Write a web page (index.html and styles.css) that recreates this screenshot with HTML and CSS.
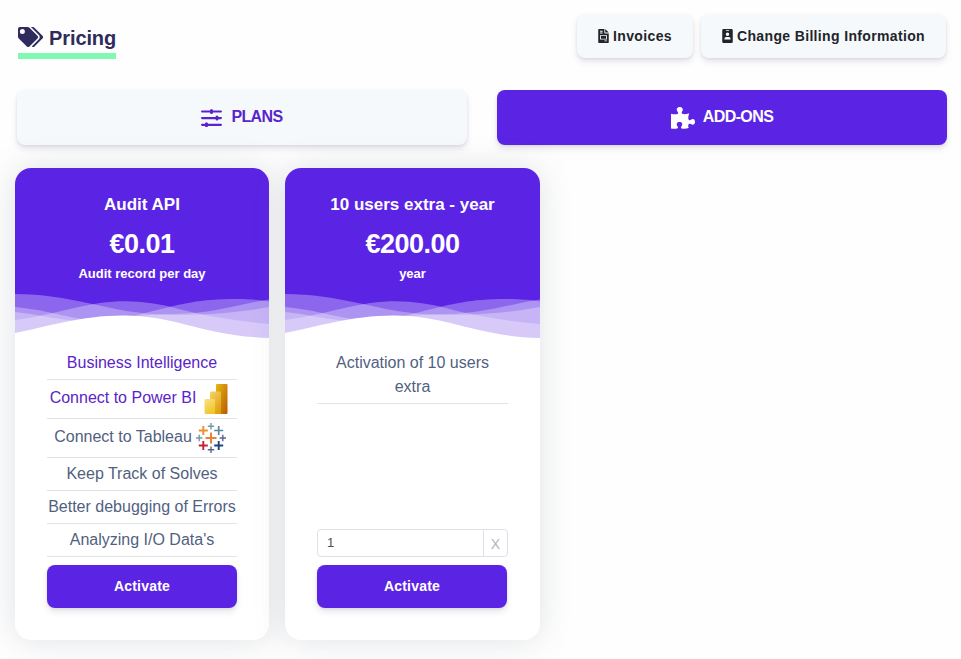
FILE: index.html
```html
<!DOCTYPE html>
<html lang="en">
<head>
<meta charset="utf-8">
<title>Pricing</title>
<link rel="stylesheet" href="styles.css">
</head>
<body>
<svg class="defs" width="0" height="0" aria-hidden="true">
  <symbol id="waves" viewBox="0 0 254 46" preserveAspectRatio="none">
    <g fill="#fff" fill-opacity=".3">
      <path d="M0 0C27 0 49 4 75 9.500C100 15 125 20.500 155 21C195 21.500 228 18 254 13V46H0Z"/>
      <path d="M0 26C27 23 54 14 85 9C116 5 139 9 160 14C190 22 220 27 254 30V46H0Z"/>
      <path d="M0 13C24 15 43 21 67 25C92 29 120 22 138 17C166 10 185 5 220 5C235 5 244 6 254 7.500V46H0Z"/>
      <path d="M0 18C19 20 36 24 53 26C90 29 120 20 160 20C195 20 225 10 254 5.500V46H0Z"/>
    </g>
    <path fill="#fff" d="M0 39C31 33 66 21.500 108 21.500C162 21.500 188 42 254 44V46H0Z"/>
  </symbol>
</svg>
<header class="top">
  <h1 class="title">
    <svg class="tags" viewBox="0 0 640 512"><path fill="currentColor" fill-rule="evenodd" d="M498 226 286 14A48 48 0 0 0 252 0H48A48 48 0 0 0 0 48v204a48 48 0 0 0 14 34l212 212a48 48 0 0 0 68 0l204-204a48 48 0 0 0 0-68zM112 176a64 64 0 1 1 0-128 64 64 0 0 1 0 128zm514 118L422 498a48 48 0 0 1-68 0l-1-1 175-174a84 84 0 0 0 0-126L332 0h48a48 48 0 0 1 34 14l212 212a48 48 0 0 1 0 68z"/></svg>
    <span>Pricing</span>
  </h1>
  <div class="actions">
    <button class="btn light invoices">
      <svg viewBox="0 0 384 512"><path fill="currentColor" fill-rule="evenodd" d="M24 0H224V136q0 24 24 24H384V488q0 24-24 24H24Q0 512 0 488V24Q0 0 24 0zM256 0l128 128H256zM64 64v32h96V64zm0 64v32h96v-32zm0 96v160h256V224zm32 32h192v96H96zm128 160v32h96v-32z"/></svg><span>Invoices</span>
    </button>
    <button class="btn light billing">
      <svg viewBox="0 0 384 512"><path fill="currentColor" fill-rule="evenodd" d="M48 0h288q48 0 48 48v416q0 48-48 48H48q-48 0-48-48V48Q0 0 48 0zm96 32q-16 0-16 16t16 16h96q16 0 16-16t-16-16zm48 96a64 64 0 1 0 0 128 64 64 0 0 0 0-128zm-45 160q-67 0-67 58v19q0 19 22 19h180q22 0 22-19v-19q0-58-67-58-45 18-90 0z"/></svg><span>Change Billing Information</span>
    </button>
  </div>
</header>
<nav class="tabs">
  <a class="tab light">
    <svg class="sliders" viewBox="0 0 21 18"><path fill="none" stroke="currentColor" stroke-width="2.200" stroke-linecap="round" d="M1.100 2.500h18.800M1.100 9.100h18.800M1.100 15.800h18.800"/><path stroke="currentColor" stroke-width="3" stroke-linecap="round" d="M10.500 1.500v2M16 8.100v2M5.500 14.800v2"/></svg>
    <span>PLANS</span>
  </a>
  <a class="tab primary">
    <svg class="puzzle" viewBox="0 0 24 22"><path fill="currentColor" d="M0 6.700C2 7.300 4.500 7.500 6 7.200 7.500 6.900 7.300 5.500 6.700 4.700 4.600 2.500 6.200 0 8.700 0s4.200 2.400 2.400 4.600C10.500 5.500 10.400 6.800 11.800 7.100 13.500 7.500 16 7 18.200 6.200 17.500 8.500 17 10.500 17.400 12.100 17.800 13.600 19.200 13.500 20 12.800 22 11 24 12.300 24 14.800s-2.100 4-4.200 2.300C18.900 16.500 17.600 16.500 17.300 18 17.100 19 17.300 20.200 17.700 21.100 15 21.900 12.500 22 10.600 21.400 9.700 20.900 10 19.700 10.600 18.900 12.100 17 11 14.900 8.500 14.900S4.900 17 6.300 18.900C7.100 20 7.200 21 6.200 21.400 4.700 22 2.300 21.900 0 21.600Z"/></svg>
    <span>ADD-ONS</span>
  </a>
</nav>
<main class="cards">
  <article class="card">
    <div class="head">
      <h2>Audit API</h2>
      <p class="price">€0.01</p>
      <p class="unit">Audit record per day</p>
      <svg class="wave"><use href="#waves"/></svg>
    </div>
    <div class="body">
      <ul>
        <li><a>Business Intelligence</a></li>
        <li class="logo-row"><a>Connect to Power BI</a>
          <svg class="power" viewBox="0 0 30 30">
            <defs>
              <linearGradient id="p1" x1="0" y1="0" x2="1" y2="1"><stop stop-color="#e8b813"/><stop offset="1" stop-color="#b85a02"/></linearGradient>
              <linearGradient id="p2" x1="0" y1="0" x2=".6" y2="1"><stop stop-color="#f5d568"/><stop offset="1" stop-color="#dfa010"/></linearGradient>
              <linearGradient id="p3" x1="0" y1="0" x2=".5" y2="1"><stop stop-color="#f9e482"/><stop offset="1" stop-color="#f0c62e"/></linearGradient>
            </defs>
            <rect x="16" width="11.500" height="30" rx="1" fill="url(#p1)"/>
            <path d="M11 7.500h9q1 0 1 1V30H10V8.500q0-1 1-1z" fill="url(#p2)"/>
            <path d="M5.500 15h8.500q1 0 1 1V30H5.500q-1 0-1-1V16q0-1 1-1z" fill="url(#p3)"/>
          </svg>
        </li>
        <li class="logo-row"><span>Connect to Tableau</span>
          <svg class="tableau" viewBox="0 0 30 30" fill="none">
            <path stroke="#e8833a" stroke-width="2" d="M15 9.500v11M9.500 15h11"/>
            <path stroke="#eb912c" stroke-width="1.900" d="M7.300 3v9M2.800 7.500h9"/>
            <path stroke="#59879b" stroke-width="1.700" d="M22.700 3v9M18.200 7.500h9"/>
            <path stroke="#c72035" stroke-width="1.900" d="M7.300 18v9M2.800 22.500h9"/>
            <path stroke="#1f447e" stroke-width="1.900" d="M22.700 18v9M18.200 22.500h9"/>
            <path stroke="#7199a6" stroke-width="1.400" d="M15 0v6.400M11.800 3.200h6.400M3.200 11.800v6.400M0 15h6.400"/>
            <path stroke="#5b6591" stroke-width="1.400" d="M15 23.600v6.400M11.800 26.800h6.400M26.800 11.800v6.400M23.600 15h6.400"/>
          </svg>
        </li>
        <li>Keep Track of Solves</li>
        <li>Better debugging of Errors</li>
        <li>Analyzing I/O Data's</li>
      </ul>
      <button class="btn primary activate">Activate</button>
    </div>
  </article>
  <article class="card wide">
    <div class="head">
      <h2>10 users extra - year</h2>
      <p class="price">€200.00</p>
      <p class="unit">year</p>
      <svg class="wave"><use href="#waves"/></svg>
    </div>
    <div class="body">
      <ul><li class="wrap">Activation of 10 users extra</li></ul>
      <div class="qty"><span class="value">1</span><span class="clear">X</span></div>
      <button class="btn primary activate">Activate</button>
    </div>
  </article>
</main>
</body>
</html>
```
FILE: styles.css
```css
* { box-sizing: border-box; }
body {
  margin: 0;
  height: 659px;
  overflow: hidden;
  background: #fefefe;
  font-family: "Liberation Sans", Arial, sans-serif;
  color: #525f7f;
}
h1, h2, p, ul { margin: 0; padding: 0; }
ul { list-style: none; }
svg { display: block; flex: none; }
.defs { position: absolute; }
.top {
  display: flex;
  justify-content: space-between;
  align-items: flex-start;
  padding: 14px 15px 0 18px;
  height: 90px;
}
.title {
  display: flex;
  gap: 6px;
  width: 98px;
  height: 45px;
  padding-top: 12px;
  border-bottom: 6px solid #80f9b2;
  color: #2f2b5c;
  font-size: 20px;
  line-height: 24px;
  letter-spacing: -.1px;
}
.tags { width: 25px; height: 20px; margin-top: 1px; }
.actions { display: flex; gap: 8px; }
.btn {
  display: flex;
  align-items: center;
  justify-content: center;
  border: 0;
  border-radius: 8px;
  font: bold 14px "Liberation Sans", Arial, sans-serif;
  box-shadow: 0 4px 6px rgba(50, 50, 93, .11), 0 1px 3px rgba(0, 0, 0, .08);
}
.light { background: #f6f9fc; color: #212529; }
.primary { background: #5b24e4; color: #fff; }
.actions .btn { gap: 4px; height: 44px; padding: 0; letter-spacing: .35px; }
.actions svg { width: 11px; height: 14px; }
.invoices { width: 116px; }
.billing { width: 245px; }
.tabs {
  display: flex;
  gap: 30px;
  height: 55px;
  padding: 0 14px 0 17px;
}
.tab {
  flex: 1;
  display: flex;
  align-items: center;
  justify-content: center;
  border-radius: 8px;
  font-size: 16px;
  font-weight: bold;
  letter-spacing: -.6px;
  box-shadow: 0 4px 6px rgba(50, 50, 93, .11), 0 1px 3px rgba(0, 0, 0, .08);
}
.tab span { padding-bottom: 2px; }
.tab.light { color: #5b24c8; gap: 9px; }
.tab.primary { gap: 8px; }
.sliders { width: 21px; height: 18px; margin-top: 1px; }
.puzzle { width: 24px; height: 22px; margin-top: 1px; }
.cards { display: flex; gap: 16px; padding: 23px 15px 0; }
.card {
  display: flex;
  flex-direction: column;
  width: 254px;
  height: 472px;
  border-radius: 16px;
  background: #fff;
  box-shadow: 0 0 32px rgba(100, 110, 125, .2);
  overflow: hidden;
}
.card.wide { width: 255px; }
.head {
  display: flex;
  flex-direction: column;
  height: 172px;
  padding-top: 25px;
  background: linear-gradient(#5b24e4 171px, #fff 171px);
  color: #fff;
  text-align: center;
}
.head h2 { font-size: 17px; line-height: 24px; }
.price { margin-top: 10px; font-size: 27px; line-height: 34px; font-weight: bold; letter-spacing: -.5px; }
.unit { margin-top: 4px; font-size: 13px; line-height: 18px; font-weight: bold; }
.wave { width: 100%; height: 46px; margin-top: auto; }
.body {
  flex: 1;
  display: flex;
  flex-direction: column;
  padding: 6px 32px 32px;
}
li {
  display: flex;
  align-items: center;
  justify-content: center;
  height: 33px;
  border-bottom: 1px solid #e0e2e4;
  font-size: 16px;
  line-height: 24px;
  text-align: center;
  white-space: nowrap;
}
li:first-child { height: 34px; }
li a { color: #5b24c8; }
li.logo-row { height: 39px; gap: 4px; padding-right: 4px; }
.logo-row a, .logo-row span { padding-bottom: 3px; }
.power, .tableau { width: 30px; height: 30px; }
li.wrap { height: 58px; padding: 0 12px; white-space: normal; }
.activate { width: 190px; height: 43px; margin-top: auto; padding: 0 0 2px; letter-spacing: .2px; }
.qty {
  display: flex;
  width: 191px;
  height: 28px;
  margin-top: auto;
  margin-bottom: 8px;
  border: 1px solid #dee2e6;
  border-radius: 4px;
  font-size: 13px;
  line-height: 26px;
}
.qty + .activate { margin-top: 0; }
.value { flex: 1; padding-left: 9px; color: #495057; }
.clear { width: 24px; border-left: 1px solid #dee2e6; color: #adb5bd; font-size: 14px; line-height: 28px; text-align: center; }
```
